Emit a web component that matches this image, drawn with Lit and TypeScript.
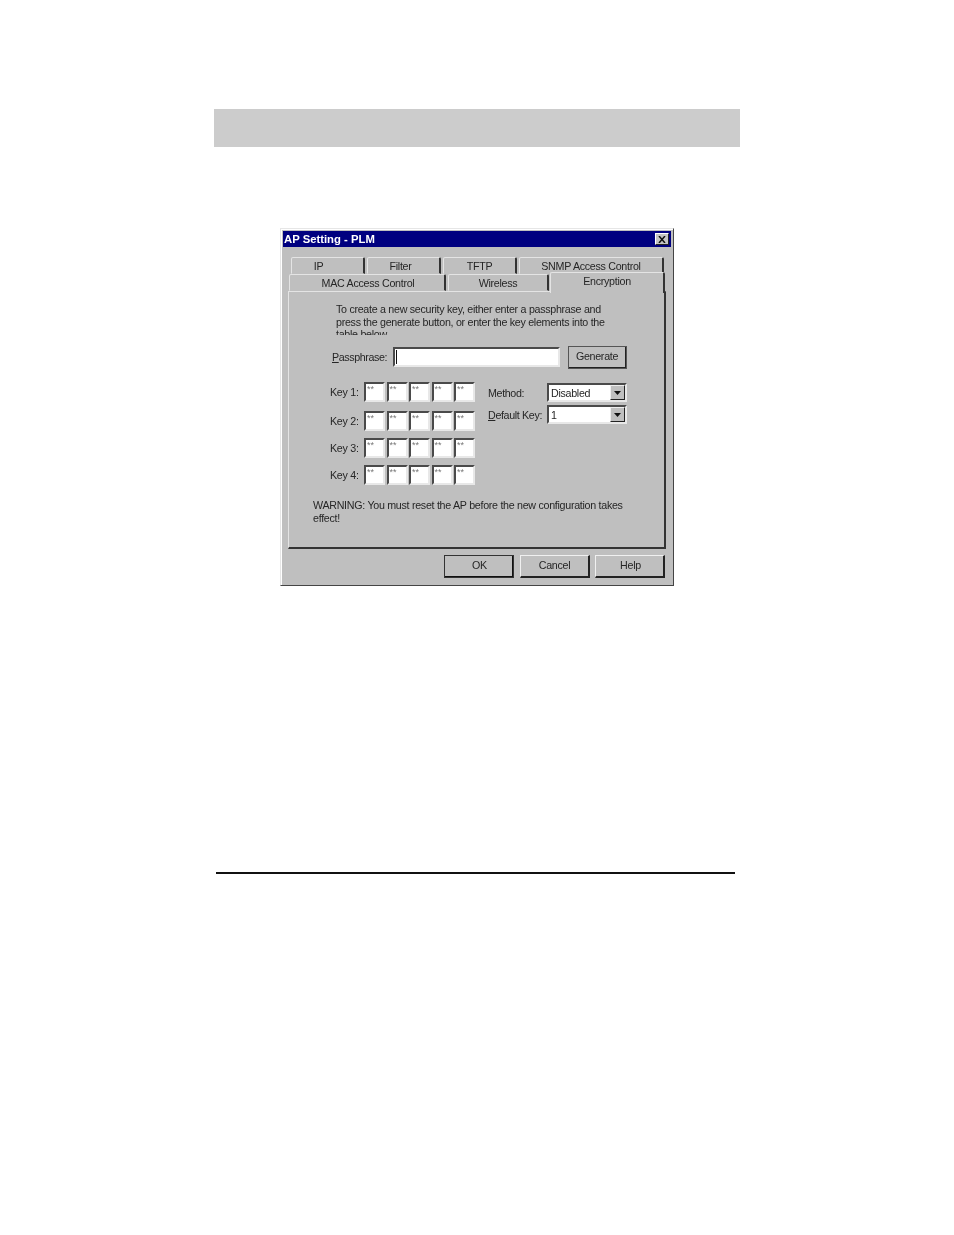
import { LitElement, html, css } from "lit";
import { customElement } from "lit/decorators.js";

const KEYS = ["Key 1:", "Key 2:", "Key 3:", "Key 4:"];

@customElement("app-root")
export class AppRoot extends LitElement {
  static styles = css`
    :host { display: block; width: 954px; height: 1235px; background: #fff; font-family: "Liberation Sans", Arial, sans-serif; overflow: hidden; }
    .page { padding: 109px 0 0 214px; display: flex; flex-direction: column; align-items: flex-start; }
    .band { width: 526px; height: 38px; background: #cccccc; }
    .dialog { margin: 81px 0 0 66px; width: 394px; height: 358px; box-sizing: border-box; background: #bfbfbf; border: 1px solid #444; border-top-color: #e6e6e6; border-left-color: #e6e6e6; padding: 2px; display: flex; flex-direction: column; color: #262626; font-size: 10.7px; letter-spacing: -0.29px; filter: blur(0.4px); box-shadow: inset 1px 1px 0 #fff; }
    .title { height: 16px; flex: none; background: #000080; color: #fff; font-weight: bold; font-size: 11.3px; letter-spacing: 0; display: flex; align-items: center; justify-content: space-between; padding: 0 2px 0 1px; }
    .close { width: 14px; height: 12px; background: #c4c4c4; border: 1px solid; border-color: #fff #222 #222 #fff; box-sizing: border-box; display: flex; align-items: center; justify-content: center; }
    .close svg { display: block; }
    .tabs { margin: 10px 0 0 5px; display: flex; flex-direction: column; width: 378px; }
    .row1 { display: flex; gap: 2px; margin-left: 3px; height: 17px; }
    .row2 { display: flex; height: 17px; align-items: flex-end; margin-left: 1px; }
    .tab { box-sizing: border-box; height: 100%; border: 1px solid; border-color: #e4e4e4 #333 transparent #e4e4e4; border-right-width: 2px; border-radius: 2px 2px 0 0; display: flex; align-items: center; justify-content: center; background: #bfbfbf; white-space: nowrap; }
    .t74 { width: 74px; }
    .ip { padding-right: 18px; }
    .filter { padding-right: 6px; }
    .t144 { width: 145px; }
    .t156 { width: 157px; padding-left: 2px; }
    .t101 { width: 101px; margin-left: 2px; }
    .sel { width: 115px; height: 21px; margin-left: 1px; margin-bottom: -2px; position: relative; z-index: 1; border-bottom: none; border-right-color: #333; align-items: flex-start; padding-top: 2px; }
    .panel { box-sizing: border-box; width: 378px; height: 258px; border: 1px solid; border-color: #e4e4e4 #333 #333 #e4e4e4; border-right-width: 2px; border-bottom-width: 2px; padding: 11px 0 0 24px; display: flex; flex-direction: column; }
    .intro { margin-left: 23px; width: 275px; height: 32px; overflow: hidden; line-height: 12.6px; }
    .pass { display: flex; align-items: center; margin-top: 10px; height: 24px; margin-left: 19px; }
    .pass label { width: 61px; white-space: nowrap; letter-spacing: -0.4px; }
    u { text-decoration: underline; }
    .field { box-sizing: border-box; background: #fff; border: 2px solid; border-color: #4a4a4a #e8e8e8 #e8e8e8 #4a4a4a; }
    .passfield { width: 167px; height: 20px; display: flex; align-items: center; padding-left: 1px; }
    .caret { width: 1px; height: 14px; background: #111; }
    .btn { box-sizing: border-box; border: 1px solid; border-color: #f0f0f0 #222 #222 #f0f0f0; border-right-width: 2px; border-bottom-width: 2px; display: flex; align-items: center; justify-content: center; background: #bfbfbf; padding-bottom: 1px; }
    .gen { width: 59px; height: 23px; margin-left: 8px; outline: 1px solid #555; outline-offset: -1px; }
    .mid { display: flex; margin-top: 13px; margin-left: 17px; }
    .keys { display: grid; grid-template-rows: 29px 27px 27px 20px; width: 158px; }
    .keyrow { display: flex; align-items: flex-start; }
    .keyrow label { width: 34px; height: 19px; display: flex; align-items: center; }
    .cells { display: flex; gap: 1.5px; }
    .cell { width: 21px; height: 20px; font-size: 9px; letter-spacing: 0; line-height: 9px; color: #777; padding: 1px 0 0 1px; overflow: hidden; }
    .opts { display: flex; flex-direction: column; gap: 3px; margin-top: 1px; }
    .opt { display: flex; align-items: center; height: 19px; }
    .opt label { width: 59px; white-space: nowrap; letter-spacing: -0.35px; }
    .select { width: 80px; height: 19px; display: flex; align-items: center; justify-content: space-between; padding-left: 2px; }
    .arrow { box-sizing: border-box; width: 15px; height: 15px; background: #bfbfbf; border: 1px solid; border-color: #eee #222 #222 #eee; display: flex; align-items: center; justify-content: center; }
    .warn { margin-top: 14px; width: 320px; line-height: 13px; }
    .foot { display: flex; margin: 6px 0 0 161px; gap: 6px; }
    .foot .btn { width: 70px; height: 23px; padding-bottom: 2px; }
    .foot .ok { border-color: #eee #111 #111 #eee; outline: 1px solid #333; outline-offset: -1px; padding-left: 2px; }
    .foot .help { margin-left: -1px; padding-left: 2px; }
    .rule { margin: 286px 0 0 2px; width: 519px; height: 2px; background: #111; }
  `;

  private arrow() {
    return html`<span class="arrow"><svg width="7" height="4" viewBox="0 0 7 4"><path d="M0 0h7L3.5 4z" fill="#111"/></svg></span>`;
  }

  render() {
    return html`<div class="page">
      <div class="band"></div>
      <div class="dialog">
        <div class="title"><span>AP Setting - PLM</span>
          <span class="close"><svg width="8" height="7" viewBox="0 0 8 7"><path d="M1 0l6 7M7 0L1 7" stroke="#111" stroke-width="1.5"/></svg></span>
        </div>
        <div class="tabs">
          <div class="row1">
            <div class="tab t74 ip">IP</div><div class="tab t74 filter">Filter</div><div class="tab t74">TFTP</div><div class="tab t144">SNMP Access Control</div>
          </div>
          <div class="row2">
            <div class="tab t156">MAC Access Control</div><div class="tab t101">Wireless</div><div class="tab sel">Encryption</div>
          </div>
          <div class="panel">
            <div class="intro">To create a new security key, either enter a passphrase and press the generate button, or enter the key elements into the table below.</div>
            <div class="pass"><label><u>P</u>assphrase:</label><div class="field passfield"><span class="caret"></span></div><div class="btn gen">Generate</div></div>
            <div class="mid">
              <div class="keys">
                ${KEYS.map((k) => html`<div class="keyrow"><label>${k}</label><div class="cells">${[0, 1, 2, 3, 4].map(() => html`<div class="field cell">**</div>`)}</div></div>`)}
              </div>
              <div class="opts">
                <div class="opt"><label>Method:</label><div class="field select">Disabled${this.arrow()}</div></div>
                <div class="opt"><label><u>D</u>efault Key:</label><div class="field select">1${this.arrow()}</div></div>
              </div>
            </div>
            <div class="warn">WARNING: You must reset the AP before the new configuration takes effect!</div>
          </div>
        </div>
        <div class="foot"><div class="btn ok">OK</div><div class="btn">Cancel</div><div class="btn help">Help</div></div>
      </div>
      <div class="rule"></div>
    </div>`;
  }
}
